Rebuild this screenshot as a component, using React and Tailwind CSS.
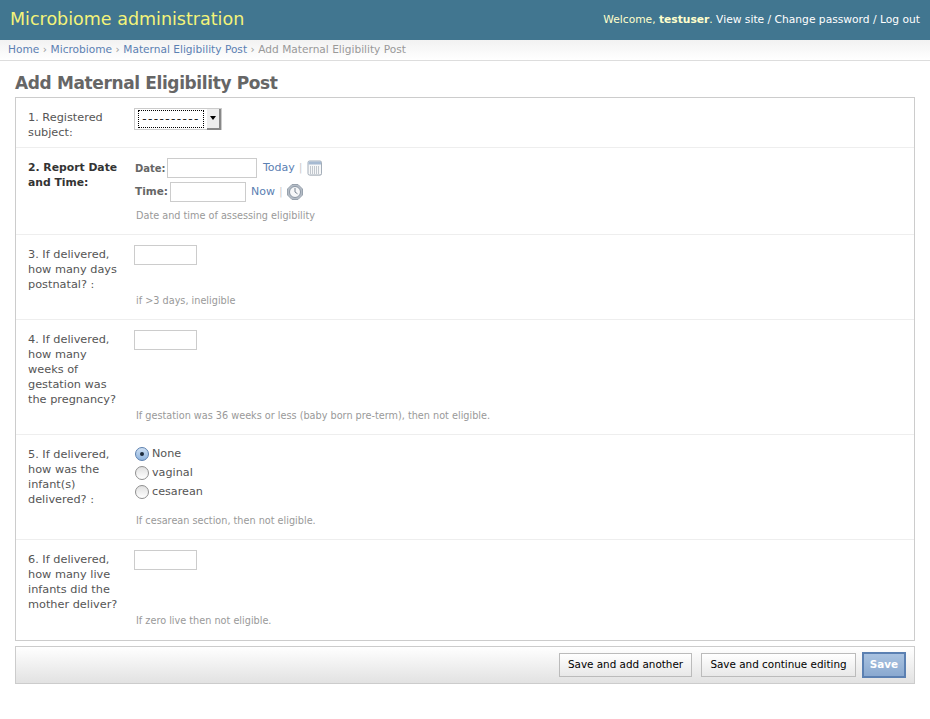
import React from 'react'

function FormRow({ label, strong = false, help, helpClass = 'mt-[29px]', height, children, last = false }) {
  return (
    <div className={`flex pl-[12px] pt-[10px] ${height} ${last ? '' : 'border-b border-[#eeeeee]'}`}>
      <label className={`mr-[13px] w-[93px] shrink-0 pt-[2px] leading-[15px] ${strong ? 'text-[10.8px] font-bold text-[#333333]' : 'text-[11.3px] text-[#555555]'}`}>
        {label}
      </label>
      <div className="flex flex-col">
        {children}
        {help && <p className={`ml-[2px] text-[9.7px] leading-[13px] text-[#999999] ${helpClass}`}>{help}</p>}
      </div>
    </div>
  )
}

function TextBox({ width }) {
  return <input type="text" className={`h-5 ${width} border border-[#cccccc] bg-white`} />
}

function Radio({ checked, label }) {
  return (
    <div className="ml-[1px] flex h-[19px] items-center gap-[3px] text-[11.2px] text-[#555555]">
      <span className={`flex h-[14px] w-[14px] items-center justify-center rounded-full border ${checked ? 'border-[#5b7fae] bg-gradient-to-b from-[#cfe0f3] to-[#8fb4de]' : 'border-[#8f8f8f] bg-gradient-to-b from-[#e0e0e0] to-white'}`}>
        {checked && <span className="h-1 w-1 rounded-full bg-[#1c2a3a]" />}
      </span>
      <span className="mt-[1px]">{label}</span>
    </div>
  )
}

function CalendarIcon() {
  return (
    <svg width="16" height="16" viewBox="0 0 16 16">
      <rect x="1.5" y="1.5" width="13.5" height="14" rx="2" fill="#c4c8cc" />
      <rect x="1" y="1" width="13.5" height="14" rx="1.5" fill="#f6f7f8" stroke="#a3adb8" />
      <rect x="1.5" y="1.5" width="12.5" height="3" fill="#a6bad2" />
      <path d="M3 7h9M3 9h9M3 11h9M3 13h9" stroke="#8d97a3" strokeDasharray="1 1" />
    </svg>
  )
}

function ClockIcon() {
  return (
    <svg width="16" height="16" viewBox="0 0 16 16">
      <polygon points="5,0.5 11,0.5 15.5,5 15.5,11 11,15.5 5,15.5 0.5,11 0.5,5" fill="#b4bcc6" stroke="#98a2ad" />
      <circle cx="8" cy="8" r="5.5" fill="#f6f7f8" stroke="#8b96a3" />
      <path d="M8 4v4l2.5 1.8" fill="none" stroke="#7a8592" />
    </svg>
  )
}

export default function App() {
  return (
    <div className="min-h-[719px] bg-white font-['DejaVu_Sans',sans-serif]">
      <header className="flex h-10 items-center justify-between bg-[#417690] px-[10px]">
        <h1 className="-mt-[1px] text-[17.5px] font-normal text-[#f4f379]">Microbiome administration</h1>
        <div className="mt-[1px] text-[10.7px] text-[#ffffcc]">
          Welcome, <strong>testuser</strong>.{' '}
          <span className="text-white">View site / Change password / Log out</span>
        </div>
      </header>

      <nav className="flex h-[21px] items-center border-b border-[#dddddd] bg-gradient-to-b from-[#f2f2f2] to-white pl-[8px] text-[10.6px] text-[#999999]">
        <a className="text-[#5b80b2]">Home</a>
        <span className="mx-[3.5px]">›</span>
        <a className="text-[#5b80b2]">Microbiome</a>
        <span className="mx-[3.5px]">›</span>
        <a className="text-[#5b80b2]">Maternal Eligibility Post</a>
        <span className="mx-[3.5px]">›</span>
        <span>Add Maternal Eligibility Post</span>
      </nav>

      <main className="px-[15px]">
        <h2 className="mt-[12px] mb-[3px] h-[21px] text-[17px] leading-[21px] font-bold tracking-[-0.38px] text-[#666666]">Add Maternal Eligibility Post</h2>

        <div className="border border-[#cccccc]">
          <FormRow label="1. Registered subject:" height="h-[50px]">
            <div className="flex h-[22px] w-[88px] items-center border border-[#cccccc] bg-white pl-[3px]">
              <span className="flex h-[18px] w-[66px] items-center justify-center border border-dotted border-black text-[12px] tracking-[1.4px] text-[#222222]">----------</span>
              <span className="ml-[3px] flex h-[21px] w-[14px] items-center justify-center border-r-2 border-b-2 border-[#888888] bg-[#eeeeee]">
                <span className="h-0 w-0 border-x-[3px] border-t-[4px] border-x-transparent border-t-black" />
              </span>
            </div>
          </FormRow>

          <FormRow label="2. Report Date and Time:" strong height="h-[87px]" help="Date and time of assessing eligibility" helpClass="mt-[7px]">
            <div className="flex h-[20px] items-center text-[11px] text-[#666666]">
              <span className="ml-[1px] mr-[3px] w-[29px] text-[10px] font-bold">Date:</span>
              <TextBox width="w-[90px]" />
              <a className="ml-[6px] text-[#5b80b2]">Today</a>
              <span className="mx-[4px] text-[#cccccc]">|</span>
              <CalendarIcon />
            </div>
            <div className="mt-[4px] flex h-[20px] items-center text-[11px] text-[#666666]">
              <span className="ml-[1px] mr-[3px] w-[32px] text-[10.5px] font-bold">Time:</span>
              <TextBox width="w-[76px]" />
              <a className="ml-[5px] text-[#5b80b2]">Now</a>
              <span className="mx-[4px] text-[#cccccc]">|</span>
              <ClockIcon />
            </div>
          </FormRow>

          <FormRow label="3. If delivered, how many days postnatal? :" height="h-[85px]" help="if >3 days, ineligible">
            <TextBox width="w-[63px]" />
          </FormRow>

          <FormRow label="4. If delivered, how many weeks of gestation was the pregnancy?" height="h-[115px]" help="If gestation was 36 weeks or less (baby born pre-term), then not eligible." helpClass="mt-[59px]">
            <TextBox width="w-[63px]" />
          </FormRow>

          <FormRow label="5. If delivered, how was the infant(s) delivered? :" height="h-[105px]" help="If cesarean section, then not eligible." helpClass="mt-[13px]">
            <div className="-mt-[1px]">
              <Radio checked label="None" />
              <Radio label="vaginal" />
              <Radio label="cesarean" />
            </div>
          </FormRow>

          <FormRow label="6. If delivered, how many live infants did the mother deliver?" height="h-[100px]" help="If zero live then not eligible." helpClass="mt-[44px]" last>
            <TextBox width="w-[63px]" />
          </FormRow>
        </div>

        <div className="mt-[5px] flex h-[38px] items-center justify-end gap-[9px] border border-[#cccccc] bg-gradient-to-b from-white to-[#e2e2e2] pr-[8px]">
          <button className="h-6 w-[133px] border border-[#bbbbbb] bg-gradient-to-b from-white to-[#e8e8e8] text-[10.4px] text-black">Save and add another</button>
          <button className="h-6 w-[155px] border border-[#bbbbbb] bg-gradient-to-b from-white to-[#e8e8e8] text-[10.4px] text-black">Save and continue editing</button>
          <button className="-ml-[3px] h-[26px] w-[44px] border-2 border-[#5b80b2] bg-gradient-to-b from-[#a9c2e0] to-[#8aa9d0] text-[10.4px] font-bold text-white">Save</button>
        </div>
      </main>
    </div>
  )
}
